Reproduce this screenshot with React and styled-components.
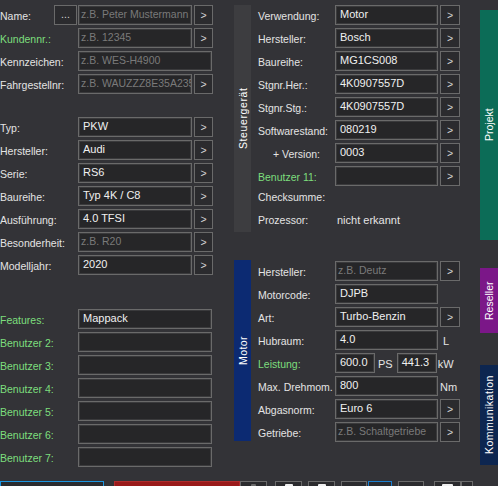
import React from "react";
import styled, { createGlobalStyle } from "styled-components";

const GlobalStyle = createGlobalStyle`
    body {
        margin: 0;
        background: #333337;
        font-family: "Liberation Sans", Arial, sans-serif;
        font-size: 10.5px;
    }
`;

const Page = styled.div`
    width: 498px;
    height: 486px;
    overflow: hidden;
    background: #333337;
    display: flex;
    flex-direction: column;
`;
const Main = styled.div`
    display: flex;
    height: 481px;
    flex-shrink: 0;
`;
// left panel
const LeftPanel = styled.div`
    width: 213px;
    padding-top: 5px;
    display: flex;
    flex-direction: column;
`;
const Group = styled.div`
    display: flex;
    flex-direction: column;
    gap: 3px;
    margin-top: ${(p) => p.$top || 0}px;
`;
const Row = styled.div`
    display: flex;
    height: 20px;
    align-items: flex-start;
`;
const Label = styled.div`
    width: ${(p) => p.$w}px;
    flex-shrink: 0;
    box-sizing: border-box;
    padding-top: ${(p) => (p.$info ? 0 : 3)}px;
    padding-left: ${(p) => p.$indent || 0}px;
    line-height: ${(p) => (p.$info ? 16 : 17)}px;
    color: ${(p) => (p.$green ? "#7ddf7d" : "#e4e4e4")};
    white-space: nowrap;
`;
const Field = styled.div`
    width: ${(p) => p.$w}px;
    height: 20px;
    flex-shrink: 0;
    box-sizing: border-box;
    border: 1px solid #6a6a6a;
    box-shadow: inset 0 0 0 1px #3a3a3c;
    background: #262628;
    color: ${(p) => (p.$hint ? "#7a7a7a" : "#f0f0f0")};
    padding-left: ${(p) => (p.$hint ? 2 : 4)}px;
    font-size: ${(p) => (p.$hint ? 10.5 : 11)}px;
    line-height: 17px;
    overflow: hidden;
    white-space: nowrap;
`;
const ArrowBtn = styled.div`
    width: ${(p) => p.$w || 19}px;
    height: 20px;
    margin-left: 2px;
    flex-shrink: 0;
    box-sizing: border-box;
    border: 1px solid #6a6a6a;
    background: #2b2b2e;
    color: #d4d4d4;
    display: flex;
    align-items: center;
    justify-content: center;
`;
const DotsBtn = styled(ArrowBtn)`
    width: 23px;
    margin-left: 0;
    margin-right: 1px;
    padding-bottom: 3px;
`;
const Unit = styled.div`
    margin-left: ${(p) => p.$ml || 2}px;
    padding-top: 3px;
    line-height: 17px;
    font-size: 11px;
    color: #e4e4e4;
    white-space: nowrap;
`;
const InfoValue = styled.div`
    line-height: 16px;
    font-size: 11px;
    color: #e4e4e4;
    margin-left: 2px;
`;
// middle column
const Middle = styled.div`
    width: 226px;
    margin-left: 21px;
    display: flex;
    flex-direction: column;
`;
const Section = styled.div`
    display: flex;
    margin-top: ${(p) => p.$top}px;
`;
const SideTab = styled.div`
    width: ${(p) => p.$w || 17}px;
    height: ${(p) => p.$h}px;
    margin-top: ${(p) => p.$top || 0}px;
    flex-shrink: 0;
    background: ${(p) => p.$bg};
    color: #ffffff;
    display: flex;
    align-items: center;
    justify-content: center;
    writing-mode: vertical-rl;
    transform: rotate(180deg);
    white-space: nowrap;
    letter-spacing: ${(p) => p.$ls || 0}px;
`;
const Form = styled.div`
    display: flex;
    flex-direction: column;
    gap: 3px;
    padding-left: 7px;
    padding-top: ${(p) => p.$pt || 0}px;
`;
const RightTabs = styled.div`
    margin-left: 20px;
    display: flex;
    flex-direction: column;
`;
// bottom toolbar
const Toolbar = styled.div`
    display: flex;
    align-items: flex-start;
`;
const ToolBtn = styled.div`
    width: ${(p) => p.$w}px;
    height: 22px;
    margin-left: ${(p) => p.$ml || 0}px;
    flex-shrink: 0;
    box-sizing: border-box;
    border: 1px solid ${(p) => p.$border || "#6a6a6a"};
    background: ${(p) => p.$bg || "#2b2b2e"};
    display: flex;
    justify-content: center;
    padding-top: 2px;
`;
const Glyph = styled.div`
    width: ${(p) => p.$w || 10}px;
    height: 8px;
    background: ${(p) => p.$c || "#f0f0f0"};
    border-radius: 1px 1px 0 0;
`;

const left1 = [
    { label: "Name:", hint: "z.B. Peter Mustermann", dots: true, btn: true },
    { label: "Kundennr.:", hint: "z.B. 12345", green: true, btn: true },
    { label: "Kennzeichen:", hint: "z.B. WES-H4900" },
    { label: "Fahrgestellnr:", hint: "z.B. WAUZZZ8E35A235", btn: true },
];
const left2 = [
    { label: "Typ:", value: "PKW", btn: true },
    { label: "Hersteller:", value: "Audi", btn: true },
    { label: "Serie:", value: "RS6", btn: true },
    { label: "Baureihe:", value: "Typ 4K / C8", btn: true },
    { label: "Ausführung:", value: "4.0 TFSI", btn: true },
    { label: "Besonderheit:", hint: "z.B. R20", btn: true },
    { label: "Modelljahr:", value: "2020", btn: true },
];
const left3 = [
    { label: "Features:", value: "Mappack", green: true },
    { label: "Benutzer 2:", value: "", green: true },
    { label: "Benutzer 3:", value: "", green: true },
    { label: "Benutzer 4:", value: "", green: true },
    { label: "Benutzer 5:", value: "", green: true },
    { label: "Benutzer 6:", value: "", green: true },
    { label: "Benutzer 7:", value: "", green: true },
];
const ecu = [
    { label: "Verwendung:", value: "Motor" },
    { label: "Hersteller:", value: "Bosch" },
    { label: "Baureihe:", value: "MG1CS008" },
    { label: "Stgnr.Her.:", value: "4K0907557D" },
    { label: "Stgnr.Stg.:", value: "4K0907557D" },
    { label: "Softwarestand:", value: "080219" },
    { label: "+ Version:", value: "0003", indent: 15 },
    { label: "Benutzer 11:", value: "", green: true },
];

const LeftRow = ({ item }) => (
    <Row>
        <Label $w={item.dots ? 54 : 78} $green={item.green}>
            {item.label}
        </Label>
        {item.dots && <DotsBtn>...</DotsBtn>}
        <Field $w={item.btn ? 114 : 134} $hint={!!item.hint}>
            {item.hint || item.value}
        </Field>
        {item.btn && <ArrowBtn>&gt;</ArrowBtn>}
    </Row>
);

const App = () => {
    return (
        <Page>
            <GlobalStyle />
            <Main>
                <LeftPanel>
                    <Group>
                        {left1.map((item) => (
                            <LeftRow key={item.label} item={item} />
                        ))}
                    </Group>
                    <Group $top={23}>
                        {left2.map((item) => (
                            <LeftRow key={item.label} item={item} />
                        ))}
                    </Group>
                    <Group $top={34}>
                        {left3.map((item) => (
                            <LeftRow key={item.label} item={item} />
                        ))}
                    </Group>
                </LeftPanel>

                <Middle>
                    <Section $top={5}>
                        <SideTab $h={227} $bg="#3d3d40" $ls={0.6}>
                            Steuergerät
                        </SideTab>
                        <Form>
                            {ecu.map((item) => (
                                <Row key={item.label}>
                                    <Label
                                        $w={77}
                                        $green={item.green}
                                        $indent={item.indent}
                                    >
                                        {item.label}
                                    </Label>
                                    <Field $w={103}>{item.value}</Field>
                                    <ArrowBtn $w={20}>&gt;</ArrowBtn>
                                </Row>
                            ))}
                            <Row>
                                <Label $w={77} $info>
                                    Checksumme:
                                </Label>
                            </Row>
                            <Row>
                                <Label $w={77} $info>
                                    Prozessor:
                                </Label>
                                <InfoValue>nicht erkannt</InfoValue>
                            </Row>
                        </Form>
                    </Section>

                    <Section $top={28}>
                        <SideTab $h={181} $bg="#0c2a72" $ls={0.4}>
                            Motor
                        </SideTab>
                        <Form $pt={1}>
                            <Row>
                                <Label $w={77}>Hersteller:</Label>
                                <Field $w={103} $hint>
                                    z.B. Deutz
                                </Field>
                                <ArrowBtn $w={20}>&gt;</ArrowBtn>
                            </Row>
                            <Row>
                                <Label $w={77}>Motorcode:</Label>
                                <Field $w={103}>DJPB</Field>
                            </Row>
                            <Row>
                                <Label $w={77}>Art:</Label>
                                <Field $w={103}>Turbo-Benzin</Field>
                                <ArrowBtn $w={20}>&gt;</ArrowBtn>
                            </Row>
                            <Row>
                                <Label $w={77}>Hubraum:</Label>
                                <Field $w={103}>4.0</Field>
                                <Unit $ml={5}>L</Unit>
                            </Row>
                            <Row>
                                <Label $w={77} $green>
                                    Leistung:
                                </Label>
                                <Field $w={40}>600.0</Field>
                                <Unit $ml={3}>PS</Unit>
                                <Field $w={40} style={{ marginLeft: 4 }}>
                                    441.3
                                </Field>
                                <Unit $ml={1}>kW</Unit>
                            </Row>
                            <Row>
                                <Label $w={77}>Max. Drehmom.</Label>
                                <Field $w={103}>800</Field>
                                <Unit $ml={2}>Nm</Unit>
                            </Row>
                            <Row>
                                <Label $w={77}>Abgasnorm:</Label>
                                <Field $w={103}>Euro 6</Field>
                                <ArrowBtn $w={20}>&gt;</ArrowBtn>
                            </Row>
                            <Row>
                                <Label $w={77}>Getriebe:</Label>
                                <Field $w={103} $hint>
                                    z.B. Schaltgetriebe
                                </Field>
                                <ArrowBtn $w={20}>&gt;</ArrowBtn>
                            </Row>
                        </Form>
                    </Section>
                </Middle>

                <RightTabs>
                    <SideTab $w={18} $h={230} $top={10} $bg="#0c6c57">
                        Projekt
                    </SideTab>
                    <SideTab $w={18} $h={65} $top={28} $bg="#7b1788">
                        Reseller
                    </SideTab>
                    <SideTab $w={18} $h={100} $top={32} $bg="#0d2650" $ls={0.5}>
                        Kommunikation
                    </SideTab>
                </RightTabs>
            </Main>

            <Toolbar>
                <ToolBtn $w={104} $border="#1b95e0" />
                <ToolBtn $w={126} $ml={10} $bg="#9a1a1a" $border="#b02c2c" />
                <ToolBtn $w={27}>
                    <Glyph $w={5} $c="#6a6a6a" />
                </ToolBtn>
                <ToolBtn $w={27} $ml={8}>
                    <Glyph $w={8} />
                </ToolBtn>
                <ToolBtn $w={27} $ml={6}>
                    <Glyph $w={8} />
                </ToolBtn>
                <ToolBtn $w={26} $ml={6} />
                <ToolBtn $w={24} $ml={1} $border="#1b7fd0" />
                <ToolBtn $w={26} $ml={6} />
                <ToolBtn $w={27} $ml={10}>
                    <Glyph $w={11} />
                </ToolBtn>
                <ToolBtn $w={12} />
            </Toolbar>
        </Page>
    );
};

export default App;
